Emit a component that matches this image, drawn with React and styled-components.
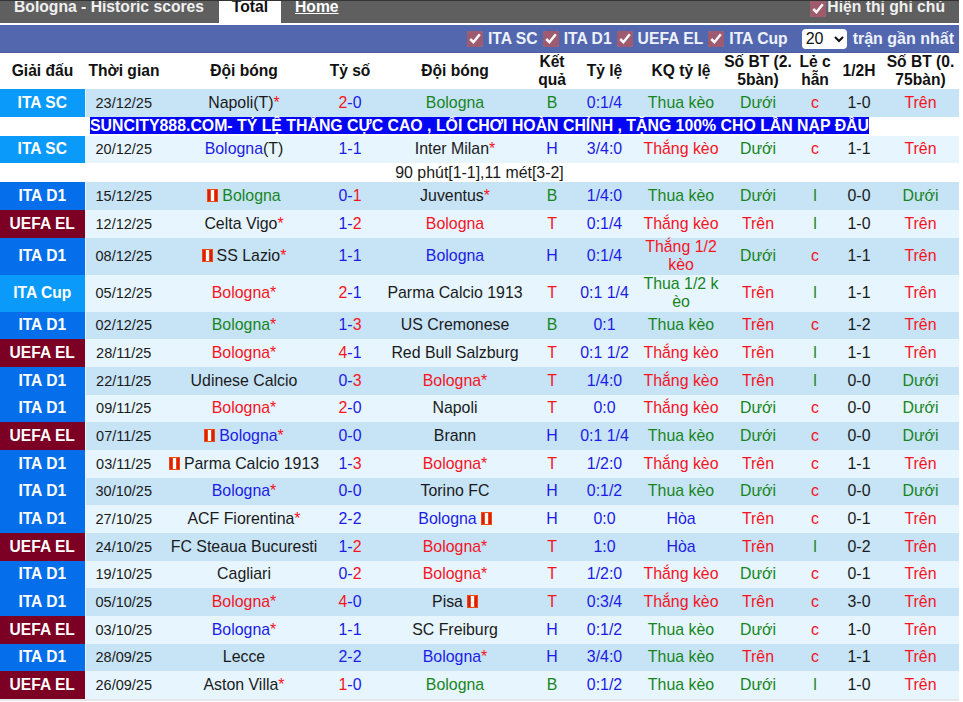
import React from 'react';
import styled, { createGlobalStyle } from 'styled-components';

const Global = createGlobalStyle`
  html, body {
    margin: 0;
    padding: 0;
    background: #fff;
    font-family: "Liberation Sans", Arial, sans-serif;
    overflow: hidden;
  }
`;

const colours = { red: '#f5141e', blue: '#1c1ce6', green: '#17851c', black: '#1a1a1a' };

const Page = styled.div`
  width: 963px;
  height: 702px;
  padding-right: 4px;
  box-sizing: border-box;
`;

// Top bar with the tabs, its text sits right under the top edge
const TabBar = styled.div`
  display: flex;
  height: 23px;
  padding-left: 14px;
  box-sizing: border-box;
  background: #5f5f5f;
  border-top: 1px solid #333;
  color: #f0f0f0;
  font-size: 15.7px;
  font-weight: bold;
  line-height: 12px;
  overflow: hidden;
`;

const Title = styled.div`
  width: 205px;
`;

const Tab = styled.div`
  width: ${p => (p.$active ? '62px' : 'auto')};
  margin-right: 14px;
  text-align: center;
  background: ${p => (p.$active ? '#fff' : 'transparent')};
  color: ${p => (p.$active ? '#111' : '#fff')};
  text-decoration: ${p => (p.$active ? 'none' : 'underline')};
`;

const Remark = styled.label`
  display: flex;
  align-items: flex-start;
  gap: 1px;
  margin-left: auto;
  padding-right: 14px;
`;

const Tick = styled.input.attrs({ type: 'checkbox', defaultChecked: true })`
  width: 16px;
  height: 16px;
  margin: 0;
  accent-color: #a35b6c;
  opacity: 0.95;
`;

const FilterBar = styled.div`
  display: flex;
  align-items: center;
  justify-content: flex-end;
  height: 28px;
  box-sizing: border-box;
  margin-top: 2px;
  padding-right: 5px;
  background: #5367af;
  border-bottom: 1px solid #4b5ea3;
  color: #eef2fb;
  font-size: 16px;
  font-weight: bold;
`;

const Filter = styled.label`
  display: flex;
  align-items: center;
  gap: 5px;
  margin-right: 5px;
  font-size: 15.7px;
`;

const Limit = styled.select`
  width: 45px;
  height: 20px;
  margin: 0 6px 0 9px;
  padding: 0;
  border: none;
  border-radius: 4px;
  background: #fff;
  color: #111;
  font-family: inherit;
  font-size: 16px;
`;

const Table = styled.table`
  width: 959px;
  table-layout: fixed;
  border-collapse: collapse;
  border-bottom: 2px solid #e4e8ea;
  font-size: 15.9px;
`;

const Col = styled.col`
  width: ${p => p.$w}px;
`;

const Head = styled.th`
  height: 36px;
  padding: 0 1px;
  color: #111;
  font-size: 15.6px;
  line-height: 18px;
  font-weight: bold;
  text-align: center;
  word-break: break-all;
`;

const Row = styled.tr`
  background: ${p => (p.$dark ? '#c7e3f6' : '#e6f5fe')};
`;

const Cell = styled.td`
  height: ${p => (p.$tall ? 37 : 27.67)}px;
  padding: 0 1px;
  text-align: center;
  line-height: 18px;
  color: ${p => colours[p.$c || 'black']};
  word-break: break-all;
`;

const League = styled.td`
  padding: 0;
  text-align: center;
  font-size: 15.6px;
  font-weight: bold;
  color: #fff;
  background: ${p => p.$bg};
  border-right: 1px solid #e6f5fe;
`;

const DateCell = styled(Cell)`
  padding-right: 2px;
  font-size: 14.5px;
`;

const Star = styled.span`
  color: ${colours.red};
`;

const Plain = styled.span`
  color: ${colours.black};
`;

const Banner = styled.td`
  height: 19px;
  padding: 0;
  background: #fff;
  text-align: center;
  line-height: 18px;
`;

const BannerText = styled.span`
  background: #0505f5;
  color: #fff;
  font-size: 15.85px;
  font-weight: bold;
  white-space: nowrap;
`;

const Note = styled.td`
  height: 19px;
  padding: 0;
  background: #fff;
  text-align: center;
  color: ${colours.black};
  line-height: 18px;
`;

const FlagIcon = styled.svg`
  width: 11px;
  height: 13px;
  vertical-align: -1px;
  margin: ${p => (p.$after ? '0 0 0 4px' : '0 4px 0 0')};
`;

const Flag = ({ after }) => (
  <FlagIcon $after={after} viewBox="0 0 11 13">
    <rect width="11" height="13" fill="#ee4a12" />
    <rect x="4" y="1" width="3" height="11" fill="#fff" />
    <rect x="1" y="1" width="2" height="11" fill="#d81f10" />
    <rect x="8" y="1" width="2" height="11" fill="#d81f10" />
  </FlagIcon>
);

const leagueBg = {
  'ITA SC': '#0a9bfa',
  'ITA Cup': '#0a9bfa',
  'ITA D1': '#056feb',
  'UEFA EL': '#7b0024',
};

const resultColour = { B: 'green', T: 'red', H: 'blue' };

const betColour = text => {
  if (text.startsWith('Thắng')) return 'red';
  if (text.startsWith('Thua')) return 'green';
  return 'blue';
};

// l = league, d = date, h / a = team text, hc / ac = team colour, s = score, r = result, o = odds,
// k = odds result, b = goals, e = odd/even, f = half time, g = goals 0.75
// "*" marks the star, "(T)" stays black, "^" and "$" put a flag before or after the name
const matches = [
  { l: 'ITA SC', d: '23/12/25', h: 'Napoli(T)*', a: 'Bologna', ac: 'green', s: '2-0', r: 'B', o: '0:1/4', k: 'Thua kèo', b: 'Dưới', e: 'c', f: '1-0', g: 'Trên' },
  { banner: 'SUNCITY888.COM- TỶ LỆ THẮNG CỰC CAO , LỐI CHƠI HOÀN CHỈNH , TẶNG 100% CHO LẦN NẠP ĐẦU' },
  { l: 'ITA SC', d: '20/12/25', h: 'Bologna(T)', hc: 'blue', a: 'Inter Milan*', s: '1-1', r: 'H', o: '3/4:0', k: 'Thắng kèo', b: 'Dưới', e: 'c', f: '1-1', g: 'Trên' },
  { note: '90 phút[1-1],11 mét[3-2]' },
  { l: 'ITA D1', d: '15/12/25', h: '^Bologna', hc: 'green', a: 'Juventus*', s: '0-1', r: 'B', o: '1/4:0', k: 'Thua kèo', b: 'Dưới', e: 'l', f: '0-0', g: 'Dưới' },
  { l: 'UEFA EL', d: '12/12/25', h: 'Celta Vigo*', a: 'Bologna', ac: 'red', s: '1-2', r: 'T', o: '0:1/4', k: 'Thắng kèo', b: 'Trên', e: 'l', f: '1-0', g: 'Trên' },
  { l: 'ITA D1', d: '08/12/25', h: '^SS Lazio*', a: 'Bologna', ac: 'blue', s: '1-1', r: 'H', o: '0:1/4', k: 'Thắng 1/2 kèo', b: 'Dưới', e: 'c', f: '1-1', g: 'Trên', tall: true },
  { l: 'ITA Cup', d: '05/12/25', h: 'Bologna*', hc: 'red', a: 'Parma Calcio 1913', s: '2-1', r: 'T', o: '0:1 1/4', k: 'Thua 1/2 kèo', b: 'Trên', e: 'l', f: '1-1', g: 'Trên', tall: true },
  { l: 'ITA D1', d: '02/12/25', h: 'Bologna*', hc: 'green', a: 'US Cremonese', s: '1-3', r: 'B', o: '0:1', k: 'Thua kèo', b: 'Trên', e: 'c', f: '1-2', g: 'Trên' },
  { l: 'UEFA EL', d: '28/11/25', h: 'Bologna*', hc: 'red', a: 'Red Bull Salzburg', s: '4-1', r: 'T', o: '0:1 1/2', k: 'Thắng kèo', b: 'Trên', e: 'l', f: '1-1', g: 'Trên' },
  { l: 'ITA D1', d: '22/11/25', h: 'Udinese Calcio', a: 'Bologna*', ac: 'red', s: '0-3', r: 'T', o: '1/4:0', k: 'Thắng kèo', b: 'Trên', e: 'l', f: '0-0', g: 'Dưới' },
  { l: 'ITA D1', d: '09/11/25', h: 'Bologna*', hc: 'red', a: 'Napoli', s: '2-0', r: 'T', o: '0:0', k: 'Thắng kèo', b: 'Dưới', e: 'c', f: '0-0', g: 'Dưới' },
  { l: 'UEFA EL', d: '07/11/25', h: '^Bologna*', hc: 'blue', a: 'Brann', s: '0-0', r: 'H', o: '0:1 1/4', k: 'Thua kèo', b: 'Dưới', e: 'c', f: '0-0', g: 'Dưới' },
  { l: 'ITA D1', d: '03/11/25', h: '^Parma Calcio 1913', a: 'Bologna*', ac: 'red', s: '1-3', r: 'T', o: '1/2:0', k: 'Thắng kèo', b: 'Trên', e: 'c', f: '1-1', g: 'Trên' },
  { l: 'ITA D1', d: '30/10/25', h: 'Bologna*', hc: 'blue', a: 'Torino FC', s: '0-0', r: 'H', o: '0:1/2', k: 'Thua kèo', b: 'Dưới', e: 'c', f: '0-0', g: 'Dưới' },
  { l: 'ITA D1', d: '27/10/25', h: 'ACF Fiorentina*', a: 'Bologna$', ac: 'blue', s: '2-2', r: 'H', o: '0:0', k: 'Hòa', b: 'Trên', e: 'c', f: '0-1', g: 'Trên' },
  { l: 'UEFA EL', d: '24/10/25', h: 'FC Steaua Bucuresti', a: 'Bologna*', ac: 'red', s: '1-2', r: 'T', o: '1:0', k: 'Hòa', b: 'Trên', e: 'l', f: '0-2', g: 'Trên' },
  { l: 'ITA D1', d: '19/10/25', h: 'Cagliari', a: 'Bologna*', ac: 'red', s: '0-2', r: 'T', o: '1/2:0', k: 'Thắng kèo', b: 'Dưới', e: 'c', f: '0-1', g: 'Trên' },
  { l: 'ITA D1', d: '05/10/25', h: 'Bologna*', hc: 'red', a: 'Pisa$', s: '4-0', r: 'T', o: '0:3/4', k: 'Thắng kèo', b: 'Trên', e: 'c', f: '3-0', g: 'Trên' },
  { l: 'UEFA EL', d: '03/10/25', h: 'Bologna*', hc: 'blue', a: 'SC Freiburg', s: '1-1', r: 'H', o: '0:1/2', k: 'Thua kèo', b: 'Dưới', e: 'c', f: '1-0', g: 'Trên' },
  { l: 'ITA D1', d: '28/09/25', h: 'Lecce', a: 'Bologna*', ac: 'blue', s: '2-2', r: 'H', o: '3/4:0', k: 'Thua kèo', b: 'Trên', e: 'c', f: '1-1', g: 'Trên' },
  { l: 'UEFA EL', d: '26/09/25', h: 'Aston Villa*', a: 'Bologna', ac: 'green', s: '1-0', r: 'B', o: '0:1/2', k: 'Thua kèo', b: 'Dưới', e: 'l', f: '1-0', g: 'Trên' },
];

const widths = [85, 78, 162, 50, 160, 34, 71, 82, 72, 42, 46, 77];
const heads = ['Giải đấu', 'Thời gian', 'Đội bóng', 'Tỷ số', 'Đội bóng', 'Kết quả', 'Tỷ lệ', 'KQ tỷ lệ', 'Số BT (2.5bàn)', 'Lẻ chẫn', '1/2H', 'Số BT (0.75bàn)'];
const filters = ['ITA SC', 'ITA D1', 'UEFA EL', 'ITA Cup'];

const Team = ({ text, colour, tall }) => {
  const before = text.startsWith('^');
  const after = text.endsWith('$');
  const clean = text.replace('^', '').replace('$', '');
  const star = clean.endsWith('*');
  const host = clean.includes('(T)');
  const name = clean.replace('*', '').replace('(T)', '');
  return (
    <Cell $c={colour} $tall={tall}>
      {before && <Flag />}
      {name}
      {host && <Plain>(T)</Plain>}
      {star && <Star>*</Star>}
      {after && <Flag after />}
    </Cell>
  );
};

const Score = ({ value, tall }) => {
  const [left, right] = value.split('-').map(Number);
  return (
    <Cell $c="blue" $tall={tall}>
      {left > right ? <Star>{left}</Star> : left}-{right > left ? <Star>{right}</Star> : right}
    </Cell>
  );
};

function App() {
  let count = 0;
  return (
    <Page>
      <Global />
      <TabBar>
        <Title>Bologna - Historic scores</Title>
        <Tab $active>Total</Tab>
        <Tab>Home</Tab>
        <Remark>
          <Tick />
          Hiện thị ghi chú
        </Remark>
      </TabBar>
      <FilterBar>
        {filters.map(name => (
          <Filter key={name}>
            <Tick />
            {name}
          </Filter>
        ))}
        <Limit defaultValue="20">
          <option value="10">10</option>
          <option value="20">20</option>
          <option value="30">30</option>
        </Limit>
        trận gần nhất
      </FilterBar>
      <Table>
        <colgroup>
          {widths.map((w, i) => <Col key={i} $w={w} />)}
        </colgroup>
        <thead>
          <tr>
            {heads.map((h, i) => <Head key={i}>{h}</Head>)}
          </tr>
        </thead>
        <tbody>
          {matches.map((m, i) => {
            if (m.banner) {
              return <tr key={i}><Banner colSpan={12}><BannerText>{m.banner}</BannerText></Banner></tr>;
            }
            if (m.note) {
              return <tr key={i}><Note colSpan={12}>{m.note}</Note></tr>;
            }
            const dark = count++ % 2 === 0;
            return (
              <Row key={i} $dark={dark}>
                <League $bg={leagueBg[m.l]}>{m.l}</League>
                <DateCell $tall={m.tall}>{m.d}</DateCell>
                <Team text={m.h} colour={m.hc} tall={m.tall} />
                <Score value={m.s} tall={m.tall} />
                <Team text={m.a} colour={m.ac} tall={m.tall} />
                <Cell $c={resultColour[m.r]}>{m.r}</Cell>
                <Cell $c="blue">{m.o}</Cell>
                <Cell $c={betColour(m.k)}>{m.k}</Cell>
                <Cell $c={m.b === 'Trên' ? 'red' : 'green'}>{m.b}</Cell>
                <Cell $c={m.e === 'c' ? 'red' : 'green'}>{m.e}</Cell>
                <Cell>{m.f}</Cell>
                <Cell $c={m.g === 'Trên' ? 'red' : 'green'}>{m.g}</Cell>
              </Row>
            );
          })}
        </tbody>
      </Table>
    </Page>
  );
}

export default App;
